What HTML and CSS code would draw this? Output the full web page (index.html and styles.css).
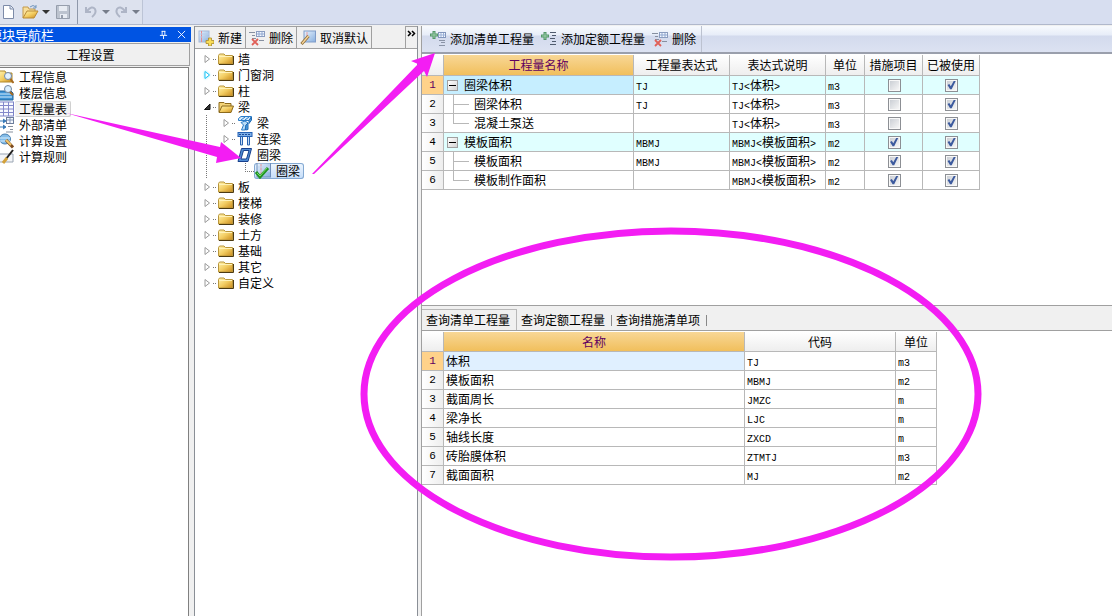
FILE: index.html
```html
<!DOCTYPE html>
<html lang="zh-CN">
<head>
<meta charset="utf-8">
<title>工程设置</title>
<link rel="stylesheet" href="styles.css">
</head>
<body>
<svg class="defs" aria-hidden="true">
  <defs>
    <linearGradient id="gold" x1="0" y1="0" x2="1" y2="1"><stop offset="0" stop-color="#fff3b0"/><stop offset=".5" stop-color="#f3cd62"/><stop offset="1" stop-color="#c98a1c"/></linearGradient>
    <linearGradient id="sheet" x1="0" y1="0" x2="1" y2="1"><stop offset="0" stop-color="#eaf4ff"/><stop offset="1" stop-color="#86aede"/></linearGradient>
    <symbol id="folder" viewBox="0 0 16 16"><path d="M.5 4.500 1.500 3H6l1.500 1.500h7V13H.5z" fill="url(#gold)" stroke="#b9963c"/><path d="M1 13.500h14.500V5" fill="none" stroke="#4c3a12"/><path d="M1 5.500h13" stroke="#fff2b8"/></symbol>
    <symbol id="folder-open" viewBox="0 0 16 16"><path d="M1 13V3.500h5l1 1h6V7" fill="#f4d478" stroke="#8c6a1c"/><path d="M1 13.500 4 7h11.500L13 13.500z" fill="url(#gold)" stroke="#8c6a1c"/></symbol>
    <symbol id="arrow" viewBox="0 0 7 10"><path d="M1 1.500v7L5.500 5z" fill="#fff" stroke="currentColor"/></symbol>
    <symbol id="arrow-open" viewBox="0 0 7 10"><path d="M6 2v5.500H.5z" fill="#333" stroke="#111"/></symbol>
    <symbol id="new" viewBox="0 0 16 16"><rect x="1" y="1" width="10" height="11" fill="url(#sheet)" stroke="#a4b8d8"/><path d="M3.500 1v11" stroke="#e88a90"/><path d="M1 4h10M1 7h10" stroke="#b8cbe8"/><path d="M10.500 8h3v2.500H16v3h-2.500V16h-3v-2.500H8v-3h2.500z" fill="#f8dc58" stroke="#a98a28" stroke-width=".8"/></symbol>
    <symbol id="del" viewBox="0 0 16 16"><path d="M0 2.500h6M3 5.500h3M3 8.500h4M10 10.500h5" stroke="#8790a0"/><rect x="7.500" y="1.500" width="8" height="5" fill="#f4f8ff" stroke="#8b9dc0"/><path d="M8 4h7M10 2v4M13 2v4" stroke="#8fa7d0"/><path d="m3 9 6 6M9 9l-6 6" stroke="#e06058" stroke-width="1.800"/></symbol>
    <symbol id="undo-default" viewBox="0 0 16 16"><rect x="4" y="1" width="11.500" height="11" fill="url(#sheet)" stroke="#7f9bc8"/><path d="M7 2v8" stroke="#e9a0a4"/><path d="m1.500 14 7-8" stroke="#8a6830" stroke-width="3"/><path d="m2 13.500 6.500-7.500" stroke="#f6d59a" stroke-width="1.500"/></symbol>
    <symbol id="add-list" viewBox="0 0 16 16"><path d="M4 0v8M0 4h8" stroke="#55976a" stroke-width="3"/><path d="M4 1v6M1 4h6" stroke="#9bcfa8"/><rect x="8.500" y="1.500" width="7" height="5" fill="#f6faff" stroke="#8296bd"/><path d="M8 4h7M11 2v4M13.500 2v4" stroke="#9ab0d8"/><path d="M9 9.500h6M11 11.500h4M9 14.500h6" stroke="#8a93a6"/></symbol>
    <symbol id="add-quota" viewBox="0 0 16 16"><path d="M4 1v8M0 5h8" stroke="#55976a" stroke-width="3"/><path d="M4 2v6M1 5h6" stroke="#9bcfa8"/><path d="M9 1.500h6M11 4.500h4M9 7.500h5M11 10.500h4M9 13.500h6" stroke="#4f5b6e"/></symbol>
    <symbol id="beam" viewBox="0 0 16 16"><path d="M1.500 3.500 4 1.500h10.500L12 5.500H1.500z" fill="#d3eafc" stroke="#2a7cc8"/><path d="M14.500 2v3L12 8.500V5.500z" fill="#4e9fe0" stroke="#1f6ab4"/><path d="M4 7.500 8 6l3 2-2 2-1 5H4.500l2-5z" fill="#b9dcf6" stroke="#2a7cc8"/><path d="M11 8v6.500L8.500 15 9 10z" fill="#4e9fe0" stroke="#1f6ab4"/><path d="m4 5 4-3M8 5l4-3" stroke="#2a7cc8"/></symbol>
    <symbol id="link-beam" viewBox="0 0 16 16"><rect x="1" y="1.500" width="14" height="4" fill="#7caee8" stroke="#2461b4"/><path d="M2 3.500h12" stroke="#1c4c98" stroke-dasharray="2 1"/><path d="M3.500 6v8h2V6M10.500 6v8h2V6" fill="#c7ddf6" stroke="#2a63b0"/></symbol>
    <symbol id="ring-beam" viewBox="0 0 16 16"><path d="M4.500 1.500h10L11 14.500H1z" fill="#4f8cd4" stroke="#173f8c"/><path d="M6.500 3.500h5.500L9.500 12H4z" fill="#fff" stroke="#173f8c"/></symbol>
    <symbol id="checked-sheet" viewBox="0 0 16 16"><rect x="2" y="0" width="13.500" height="14" fill="url(#sheet)" stroke="#6f8fbc"/><path d="M6 1v13" stroke="#e09098"/><path d="M3 4h12M3 8h12" stroke="#c5d7ee"/><path d="m1 9 4 5 8-9" fill="none" stroke="#219424" stroke-width="3"/><path d="m2 10 3 3 7-8" fill="none" stroke="#77df65"/></symbol>
    <symbol id="nav-info" viewBox="0 0 16 16"><path d="M1 2h6l1 2h6v9H1z" fill="url(#gold)" stroke="#b18a2c"/><circle cx="10" cy="7" r="3.500" fill="#e3f2ff" stroke="#7288a5"/><path d="m12.500 10 3 4" stroke="#a46922" stroke-width="2"/></symbol>
    <symbol id="nav-floor" viewBox="0 0 16 16"><path d="M1 6h12l2 2v7H1z" fill="#3f94d4" stroke="#20649d"/><path d="M1 9h13M1 12h13" stroke="#d6efff"/><circle cx="10" cy="4" r="3.500" fill="#d9efff" stroke="#7186a0"/><path d="m12 7 3 3" stroke="#a46922" stroke-width="2"/></symbol>
    <symbol id="nav-table" viewBox="0 0 16 16"><rect x=".5" y="1" width="15" height="14" fill="#f7f9ff" stroke="#7c83c8"/><path d="M0 4.500h15M0 8h15M0 11.500h15M5.500 1v14M10.500 1v14" stroke="#8388ca"/></symbol>
    <symbol id="nav-ext" viewBox="0 0 16 16"><path d="M2 4h5M5 2l3 2-3 2M2 10h5M5 8l3 2-3 2" stroke="#397ab8" fill="#397ab8"/><rect x="8.500" y=".5" width="7" height="6" fill="#f6faff" stroke="#6e7e9c"/><path d="M9 3h6M12 1v5" stroke="#8596b8"/><path d="M10 9.500h5M12 12.500h3M8 15h7" stroke="#87909e"/></symbol>
    <symbol id="nav-calc" viewBox="0 0 16 16"><ellipse cx="7" cy="6" rx="5.500" ry="5" fill="#83bce8" stroke="#4a7fae"/><path d="M2 5h10M2 8h10" stroke="#d7efff"/><path d="m8 7 7 7.500" stroke="#7e4c1f" stroke-width="3"/><path d="m8 7 5 5" stroke="#f2c76c" stroke-width="2"/></symbol>
    <symbol id="nav-rule" viewBox="0 0 16 16"><path d="M1 5h14v8H1z" fill="#f3f5f8" stroke="#9aa5b3"/><path d="M15 1 8 10" stroke="#222" stroke-width="2"/><path d="m9 9-4 5" stroke="#d3a13a" stroke-width="3"/></symbol>
  </defs>
</svg>

<header class="quickbar">
  <div class="quick-group files">
    <button aria-label="新建文件"><svg viewBox="0 0 16 16"><path d="M3.500 1.500h7l3 3v10h-10z" fill="#fff" stroke="#7d8ba8"/><path d="M10 2v3h3" fill="#dbe4f2" stroke="#7d8ba8"/></svg></button>
    <button class="wide" aria-label="打开"><svg viewBox="0 0 18 16"><path d="M2 14V3h5l1 2h6v3" fill="#f8df9a" stroke="#c39a4c"/><path d="m2 14 4-7h11l-4 7z" fill="url(#gold)" stroke="#b98a36"/><path d="M9 3q3-3 6 0m0-2v3h-3" fill="none" stroke="#7297be"/></svg><i class="caret"></i></button>
    <button aria-label="保存"><svg viewBox="0 0 16 16"><path d="M1.500 1.500h13v13h-13z" fill="#bcc3cf" stroke="#969eac"/><path d="M4 2h8v5H4zM5 10h7v4H5z" fill="#e8ecf3"/><path d="M6 11h2v3H6z" fill="#969eac"/></svg></button>
  </div>
  <div class="quick-group history">
    <button class="wide" aria-label="撤销"><svg viewBox="0 0 16 16"><path d="M3 3v5h5M4 7q5-6 8-2 2 4-3 8" fill="none" stroke="#aeb5c6" stroke-width="2"/></svg><i class="caret dim"></i></button>
    <button class="wide" aria-label="重做"><svg viewBox="0 0 16 16"><path d="M13 3v5H8M12 7Q7 1 4 5q-2 4 3 8" fill="none" stroke="#aeb5c6" stroke-width="2"/></svg><i class="caret dim"></i></button>
  </div>
</header>

<main class="workspace">
  <aside class="nav">
    <div class="nav-title"><span>模块导航栏</span>
      <div class="nav-tools">
        <button aria-label="固定"><svg viewBox="0 0 10 10"><path d="M3 1.500h4M3.500 1v5M6.500 1v5M1 6h8M5 6v4" stroke="#fff" fill="none"/></svg></button>
        <button aria-label="关闭"><svg viewBox="0 0 10 10"><path d="m1 1 8 8M9 1 1 9" stroke="#fff"/></svg></button>
      </div>
    </div>
    <button class="nav-head">工程设置</button>
    <nav class="nav-list">
      <a href="#"><svg><use href="#nav-info"/></svg><span>工程信息</span></a>
      <a href="#"><svg><use href="#nav-floor"/></svg><span>楼层信息</span></a>
      <a href="#" class="current"><svg><use href="#nav-table"/></svg><span>工程量表</span></a>
      <a href="#"><svg><use href="#nav-ext"/></svg><span>外部清单</span></a>
      <a href="#"><svg><use href="#nav-calc"/></svg><span>计算设置</span></a>
      <a href="#"><svg><use href="#nav-rule"/></svg><span>计算规则</span></a>
    </nav>
  </aside>

  <section class="members">
    <div class="member-bar">
      <button><svg><use href="#new"/></svg>新建</button>
      <button><svg><use href="#del"/></svg>删除</button>
      <button><svg><use href="#undo-default"/></svg>取消默认</button>
      <button class="more" aria-label="更多"><svg viewBox="0 0 9 7"><path d="m1 1 2.500 2.500L1 6m4-5 2.500 2.500L5 6" fill="none" stroke="#000" stroke-width="1.500"/></svg></button>
    </div>
    <ul class="tree">
      <li><div class="node"><svg class="exp"><use href="#arrow"/></svg><i></i><svg><use href="#folder"/></svg>墙</div></li>
      <li><div class="node"><svg class="exp hot"><use href="#arrow"/></svg><i></i><svg><use href="#folder"/></svg>门窗洞</div></li>
      <li><div class="node"><svg class="exp"><use href="#arrow"/></svg><i></i><svg><use href="#folder"/></svg>柱</div></li>
      <li><div class="node"><svg class="exp"><use href="#arrow-open"/></svg><i></i><svg><use href="#folder-open"/></svg>梁</div>
        <ul>
          <li><div class="node"><svg class="exp"><use href="#arrow"/></svg><i></i><svg><use href="#beam"/></svg>梁</div></li>
          <li><div class="node"><svg class="exp"><use href="#arrow"/></svg><i></i><svg><use href="#link-beam"/></svg>连梁</div></li>
          <li><div class="node"><svg class="exp"></svg><i></i><svg><use href="#ring-beam"/></svg>圈梁</div>
            <div class="leaf"><b></b><div class="picked"><svg><use href="#checked-sheet"/></svg>圈梁</div></div>
          </li>
        </ul>
      </li>
      <li><div class="node"><svg class="exp"><use href="#arrow"/></svg><i></i><svg><use href="#folder"/></svg>板</div></li>
      <li><div class="node"><svg class="exp"><use href="#arrow"/></svg><i></i><svg><use href="#folder"/></svg>楼梯</div></li>
      <li><div class="node"><svg class="exp"><use href="#arrow"/></svg><i></i><svg><use href="#folder"/></svg>装修</div></li>
      <li><div class="node"><svg class="exp"><use href="#arrow"/></svg><i></i><svg><use href="#folder"/></svg>土方</div></li>
      <li><div class="node"><svg class="exp"><use href="#arrow"/></svg><i></i><svg><use href="#folder"/></svg>基础</div></li>
      <li><div class="node"><svg class="exp"><use href="#arrow"/></svg><i></i><svg><use href="#folder"/></svg>其它</div></li>
      <li><div class="node"><svg class="exp"><use href="#arrow"/></svg><i></i><svg><use href="#folder"/></svg>自定义</div></li>
    </ul>
  </section>

  <section class="detail">
    <div class="detail-bar">
      <div class="detail-tools">
        <button><svg><use href="#add-list"/></svg>添加清单工程量</button>
        <button><svg><use href="#add-quota"/></svg>添加定额工程量</button>
        <button><svg><use href="#del"/></svg>删除</button>
      </div>
    </div>
    <div class="upper">
      <table class="grid quantities">
        <colgroup><col class="c-num"><col class="c-name"><col class="c-expr"><col class="c-expr"><col class="c-unit"><col class="c-measure"><col class="c-used"></colgroup>
        <thead><tr><th></th><th class="on">工程量名称</th><th>工程量表达式</th><th>表达式说明</th><th>单位</th><th>措施项目</th><th>已被使用</th></tr></thead>
        <tbody>
          <tr class="group active"><th>1</th><td><div class="parent"><button aria-label="折叠"></button>圈梁体积</div></td><td><code>TJ</code></td><td><code>TJ&lt;</code>体积<code>&gt;</code></td><td><code>m3</code></td><td class="tick"><input type="checkbox" aria-label="措施项目 1"></td><td class="tick"><input type="checkbox" aria-label="已被使用 1" checked></td></tr>
          <tr><th>2</th><td><div class="child">圈梁体积</div></td><td><code>TJ</code></td><td><code>TJ&lt;</code>体积<code>&gt;</code></td><td><code>m3</code></td><td class="tick"><input type="checkbox" aria-label="措施项目 2"></td><td class="tick"><input type="checkbox" aria-label="已被使用 2" checked></td></tr>
          <tr><th>3</th><td><div class="child last">混凝土泵送</div></td><td></td><td><code>TJ&lt;</code>体积<code>&gt;</code></td><td><code>m3</code></td><td class="tick"><input type="checkbox" aria-label="措施项目 3"></td><td class="tick"><input type="checkbox" aria-label="已被使用 3" checked></td></tr>
          <tr class="group"><th>4</th><td><div class="parent"><button aria-label="折叠"></button>模板面积</div></td><td><code>MBMJ</code></td><td><code>MBMJ&lt;</code>模板面积<code>&gt;</code></td><td><code>m2</code></td><td class="tick"><input type="checkbox" aria-label="措施项目 4" checked></td><td class="tick"><input type="checkbox" aria-label="已被使用 4" checked></td></tr>
          <tr><th>5</th><td><div class="child">模板面积</div></td><td><code>MBMJ</code></td><td><code>MBMJ&lt;</code>模板面积<code>&gt;</code></td><td><code>m2</code></td><td class="tick"><input type="checkbox" aria-label="措施项目 5" checked></td><td class="tick"><input type="checkbox" aria-label="已被使用 5" checked></td></tr>
          <tr><th>6</th><td><div class="child last">模板制作面积</div></td><td></td><td><code>MBMJ&lt;</code>模板面积<code>&gt;</code></td><td><code>m2</code></td><td class="tick"><input type="checkbox" aria-label="措施项目 6" checked></td><td class="tick"><input type="checkbox" aria-label="已被使用 6" checked></td></tr>
        </tbody>
      </table>
    </div>
    <div class="tabs" role="tablist">
      <button role="tab" aria-selected="true">查询清单工程量</button>
      <button role="tab" aria-selected="false">查询定额工程量</button>
      <button role="tab" aria-selected="false">查询措施清单项</button>
    </div>
    <div class="lower">
      <table class="grid codes">
        <colgroup><col class="c-num"><col class="c-title"><col class="c-code"><col class="c-dim"></colgroup>
        <thead><tr><th></th><th class="on">名称</th><th>代码</th><th>单位</th></tr></thead>
        <tbody>
          <tr class="active"><th>1</th><td>体积</td><td><code>TJ</code></td><td><code>m3</code></td></tr>
          <tr><th>2</th><td>模板面积</td><td><code>MBMJ</code></td><td><code>m2</code></td></tr>
          <tr><th>3</th><td>截面周长</td><td><code>JMZC</code></td><td><code>m</code></td></tr>
          <tr><th>4</th><td>梁净长</td><td><code>LJC</code></td><td><code>m</code></td></tr>
          <tr><th>5</th><td>轴线长度</td><td><code>ZXCD</code></td><td><code>m</code></td></tr>
          <tr><th>6</th><td>砖胎膜体积</td><td><code>ZTMTJ</code></td><td><code>m3</code></td></tr>
          <tr><th>7</th><td>截面面积</td><td><code>MJ</code></td><td><code>m2</code></td></tr>
        </tbody>
      </table>
    </div>
  </section>
</main>

<svg class="marks" viewBox="0 0 1112 616" aria-hidden="true">
  <path d="M66 113 220 147 221 142 241 158 216 163 217 157z"/>
  <path d="M312 174 418 64 411 61 435 53 427 77 424 71 314 174z"/>
  <ellipse cx="671" cy="394" rx="307" ry="163"/>
</svg>
</body>
</html>
```

FILE: styles.css
```css
* { box-sizing: border-box; }
body {
  margin: 0;
  height: 100vh;
  display: flex;
  flex-direction: column;
  overflow: hidden;
  position: relative;
  background: #f0f0f0;
  color: #000;
  font: 12px/16px "Noto Sans CJK SC", sans-serif;
}
button {
  margin: 0;
  padding: 0;
  border: 0;
  background: none;
  color: inherit;
  font: inherit;
  display: flex;
  align-items: center;
}
svg { display: block; flex: none; width: 16px; height: 16px; }
.defs { position: absolute; width: 0; height: 0; }

.quickbar {
  display: flex;
  flex: none;
  height: 25px;
  background: #d7def0;
  border-bottom: 1px solid #b0b8cb;
}
.quick-group { display: flex; align-items: center; height: 24px; background: #dde2ee; }
.files { gap: 5px; padding-right: 6px; border-right: 1px solid #8f98aa; }
.history { gap: 3px; padding: 0 2px 0 5px; border-right: 1px solid #bcc4d6; }
.wide { gap: 3px; }
.files .wide svg { width: 18px; }
.caret { border: 4px solid transparent; border-top-color: #333; border-bottom: 0; }
.caret.dim { border-top-color: #777d8a; }

.workspace {
  flex: 1;
  min-height: 0;
  display: grid;
  grid-template-columns: 191px 224px 1fr;
  column-gap: 3px;
  padding-top: 1px;
}

.nav { display: flex; flex-direction: column; min-width: 0; overflow: hidden; padding-top: 1px; }
.nav-title {
  display: flex;
  justify-content: space-between;
  align-items: center;
  height: 15px;
  padding-right: 5px;
  background: #0054e3;
  color: #fff;
  font-size: 13px;
  line-height: 14px;
}
.nav-title span { margin-left: -11px; }
.nav-tools { display: flex; gap: 9px; }
.nav-tools svg { width: 9px; height: 9px; }
.nav-head {
  flex: none;
  justify-content: center;
  height: 23px;
  margin: 1px 1px 1px 0;
  padding-right: 8px;
  border: solid #a0a0a0;
  border-width: 1px 1px 1px 0;
}
.nav-list {
  flex: 1;
  margin-right: 2px;
  padding-top: 1px;
  background: #fff;
  border: solid #808080;
  border-width: 1px 1px 0 0;
}
.nav-list a {
  display: flex;
  align-items: center;
  gap: 5px;
  width: 73px;
  height: 16px;
  margin-left: -2px;
  color: #000;
  text-decoration: none;
}
.nav-list .current span {
  flex: 1;
  height: 16px;
  margin-left: -4px;
  padding-left: 4px;
  background: #f3f3f3;
  box-shadow: inset -1px -1px #d0d0d0, inset 0 1px #dedede;
  border-radius: 2px;
}

.members {
  display: flex;
  flex-direction: column;
  min-width: 0;
  border: solid #8a8f96;
  border-width: 0 1px;
  background: #fff;
}
.member-bar { display: flex; flex: none; height: 23px; background: #f0f0f0; border-bottom: 1px solid #a0a0a0; }
.member-bar button { gap: 4px; padding: 0 3px; border: solid #a0a0a0; border-width: 1px 1px 0 0; }
.member-bar .more { margin-left: auto; padding: 3px 1px; border-width: 1px 0 0 1px; align-items: flex-start; }
.more svg { width: 9px; height: 7px; }
.tree, .tree ul { margin: 0; padding: 0; list-style: none; }
.tree { padding: 2px 0 0 9px; }
.tree ul { margin-left: 2px; padding-left: 17px; background: repeating-linear-gradient(#777 0 1px, transparent 1px 2px) 0 0 / 1px 100% no-repeat; }
.node { display: flex; align-items: center; height: 16px; }
.node i { width: 4px; height: 1px; margin: 0 1px 0 2px; background: repeating-linear-gradient(90deg, #777 0 1px, transparent 1px 2px); }
.node svg + i + svg { margin-right: 4px; }
.exp { width: 7px; height: 10px; color: #9a9a9a; }
.node .exp.hot { color: #20c4f4; filter: drop-shadow(0 0 1px #7fe0fa); }
.leaf { display: flex; height: 16px; padding-left: 22px; }
.leaf b { width: 9px; height: 9px; border: dotted #777; border-width: 0 0 1px 1px; }
.picked {
  display: flex;
  align-items: center;
  gap: 5px;
  height: 16px;
  padding: 0 4px 0 1px;
  border-radius: 3px;
  background: linear-gradient(#eef6ff, #c4dcf8);
  box-shadow: inset 0 0 0 1px #84a9d2;
}

.detail { display: flex; flex-direction: column; min-width: 0; background: #fff; border-left: 1px solid #a0a0a0; }
.detail-bar {
  display: flex;
  flex: none;
  height: 28px;
  background: linear-gradient(#f6f9fd 0 1px, #e7edf8 9px, #d3daed 10px, #dce2f2 26px);
  border-bottom: 2px solid #9a9fac;
}
.detail-tools { display: flex; gap: 7px; padding: 0 5px 0 8px; border-right: 1px solid #bcc2d0; }
.detail-tools button { gap: 4px; }
.upper { flex: none; height: 251px; padding-top: 1px; }
.grid { border-collapse: separate; border-spacing: 0; table-layout: fixed; }
.quantities { width: 558px; }
.codes { width: 515px; }
.c-num { width: 22px; }
.c-name { width: 190px; }
.c-expr { width: 96px; }
.c-unit { width: 39px; }
.c-measure { width: 58px; }
.c-used { width: 57px; }
.c-title { width: 301px; }
.c-code { width: 151px; }
.c-dim { width: 41px; }
.grid th, .grid td { height: 19px; padding: 0; border: solid #b8b8b8; border-width: 0 1px 1px 0; line-height: 16px; white-space: nowrap; }
.grid th { font-weight: normal; text-align: center; background: linear-gradient(#fff, #eee); }
.grid thead th { height: 21px; }
.codes thead th { height: 20px; }
.grid thead .on { background: linear-gradient(#f8d796, #f1bf5c); color: #600060; }
.grid tbody th { font: 11px/16px "Liberation Mono", monospace; background: linear-gradient(90deg, #fff, #eee); }
.grid .active th { background: #ffd28a; color: #600060; }
.grid td { padding-left: 2px; }
.grid .group td { background: #e0ffff; }
.quantities .active td:nth-child(2) { background: #c6eeff; }
.codes .active td:nth-child(2) { background: #e0f0ff; }
code { font: 10px/10px "Liberation Mono", monospace; }
.parent { display: flex; align-items: center; gap: 6px; }
.parent button {
  width: 11px;
  height: 11px;
  margin-left: 1px;
  border: 1px solid #a0a0a0;
  background: linear-gradient(#000, #000) center / 7px 1px no-repeat, linear-gradient(135deg, #fff, #d4d4d4);
}
.child { position: relative; height: 18px; padding-left: 28px; line-height: 18px; }
.child::before, .child::after { content: ""; position: absolute; left: 7px; background: #b8b8b8; }
.child::before { top: 0; width: 1px; height: 19px; }
.child.last::before { height: 9px; }
.child::after { top: 9px; width: 16px; height: 1px; }
.grid .tick { padding: 0 0 0 1px; text-align: center; }
.tick input {
  appearance: none;
  display: block;
  position: relative;
  width: 13px;
  height: 13px;
  margin: 0 auto;
  border: 1px solid #8c8f94;
  background: linear-gradient(135deg, #cbcfd5, #f6f6f6) content-box, #f8f8f8;
  padding: 1px;
}
.tick input:checked::after {
  content: "";
  position: absolute;
  inset: 1px;
  background: #3c5a9e;
  clip-path: polygon(6% 50%, 26% 40%, 42% 64%, 76% 4%, 98% 4%, 52% 98%, 34% 98%);
}
.tabs { display: flex; align-items: flex-end; flex: none; height: 26px; background: #f0f0f0; border: solid #a0a0a0; border-width: 1px 0; }
.tabs button { height: 20px; padding: 0 4px; }
.tabs button:not(:first-child)::after { content: ""; width: 1px; height: 11px; margin-left: 6px; background: #888; }
.tabs button:last-child { padding-left: 0; }
.tabs button[aria-selected="true"] { height: 21px; padding: 0 6px 0 4px; border: solid #b8b8b8; border-width: 1px 1px 0 0; }
.lower { flex: 1; padding-top: 1px; }

.marks { position: absolute; left: 0; top: 0; width: 1112px; height: 616px; pointer-events: none; fill: #f31df3; }
.marks ellipse { fill: none; stroke: #f31df3; stroke-width: 7; }
```
